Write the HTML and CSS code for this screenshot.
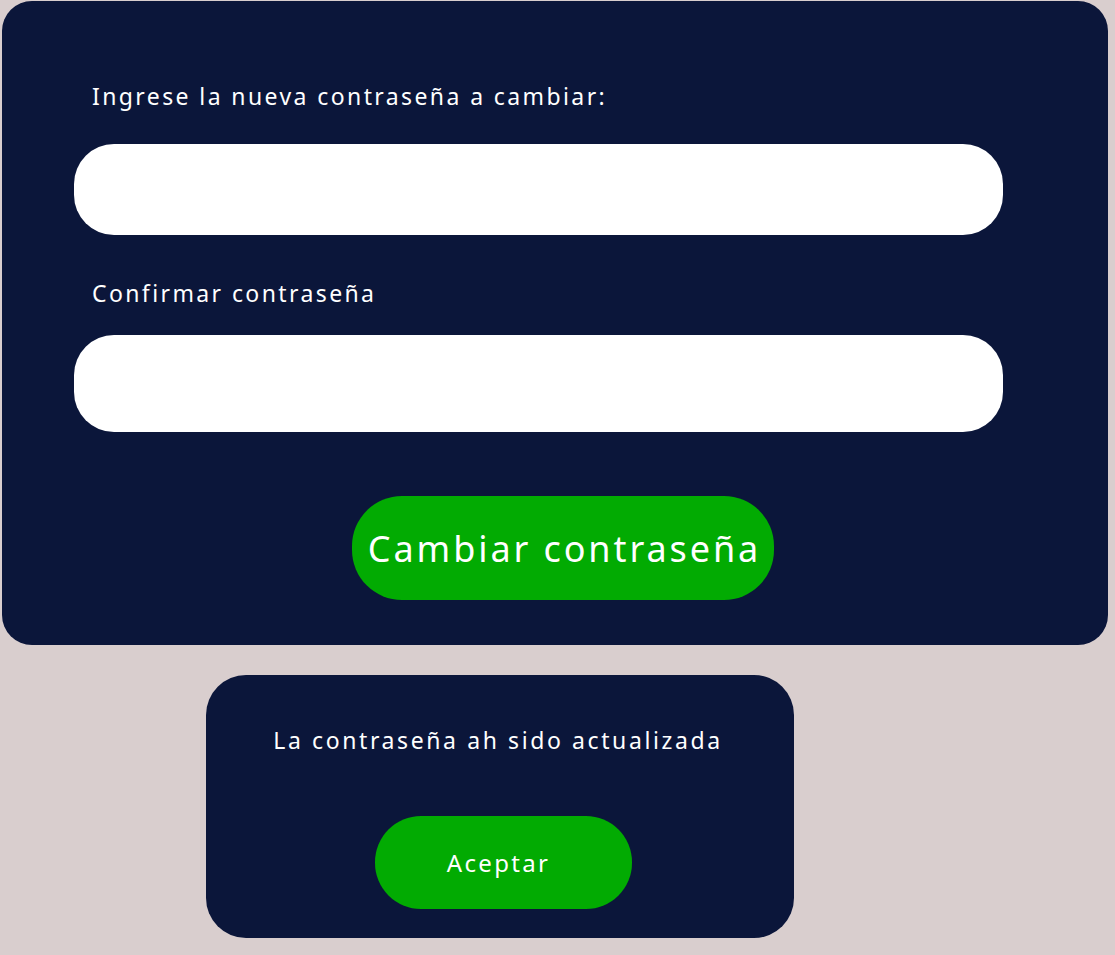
FILE: index.html
```html
<!DOCTYPE html>
<html lang="es">
<head>
<meta charset="utf-8">
<title>Cambiar contraseña</title>
<link rel="stylesheet" href="styles.css">
</head>
<body>
<main class="page">
  <section class="card">
    <label class="label label-first" for="pw1">Ingrese la nueva contraseña a cambiar:</label>
    <input class="field field-first" id="pw1" type="password">
    <label class="label label-second" for="pw2">Confirmar contraseña</label>
    <input class="field field-second" id="pw2" type="password">
    <button class="btn-main" type="button">Cambiar contraseña</button>
  </section>
  <section class="dialog">
    <p class="dialog-msg">La contraseña ah sido actualizada</p>
    <button class="btn-ok" type="button">Aceptar</button>
  </section>
</main>
</body>
</html>
```
FILE: styles.css
```css
html, body {
  margin: 0;
  padding: 0;
}
body {
  background: #d9cece;
  font-family: "Noto Sans", "Open Sans", sans-serif;
  color: #ffffff;
}
.page {
  display: flex;
  flex-direction: column;
  align-items: flex-start;
  padding: 1px 0 0 2px;
}
.card {
  box-sizing: border-box;
  width: 1106px;
  height: 644px;
  background: #0b163a;
  border-radius: 30px;
  display: flex;
  flex-direction: column;
  align-items: flex-start;
  padding: 80px 0 0 72px;
}
.label {
  display: block;
  font-size: 23px;
  line-height: 30px;
  letter-spacing: 2.4px;
  margin-left: 18px;
}
.field {
  box-sizing: border-box;
  width: 929px;
  border: none;
  outline: none;
  background: #ffffff;
  border-radius: 40px;
  padding: 0 30px;
  font-size: 22px;
}
.field-first {
  height: 91px;
  margin-top: 33px;
}
.label-second {
  margin-top: 43px;
}
.field-second {
  height: 97px;
  margin-top: 27px;
}
.btn-main {
  align-self: flex-start;
  margin: 64px 0 0 278px;
  width: 422px;
  height: 104px;
  border: none;
  border-radius: 50px;
  background: #02ab02;
  color: #ffffff;
  font-family: inherit;
  font-size: 36px;
  letter-spacing: 2.9px;
  padding: 0 0 0 3px;
}
.dialog {
  box-sizing: border-box;
  margin: 30px 0 0 204px;
  width: 588px;
  height: 263px;
  background: #0b163a;
  border-radius: 40px;
  display: flex;
  flex-direction: column;
  align-items: flex-start;
  padding-top: 50px;
}
.dialog-msg {
  align-self: stretch;
  margin: 0;
  text-align: center;
  font-size: 23px;
  line-height: 30px;
  letter-spacing: 2.6px;
  padding-right: 4px;
}
.btn-ok {
  margin: 61px 0 0 169px;
  width: 257px;
  height: 93px;
  border: none;
  border-radius: 46px;
  background: #02ab02;
  color: #ffffff;
  font-family: inherit;
  font-size: 24px;
  letter-spacing: 2.3px;
  padding: 0 10px 0 0;
}
```
